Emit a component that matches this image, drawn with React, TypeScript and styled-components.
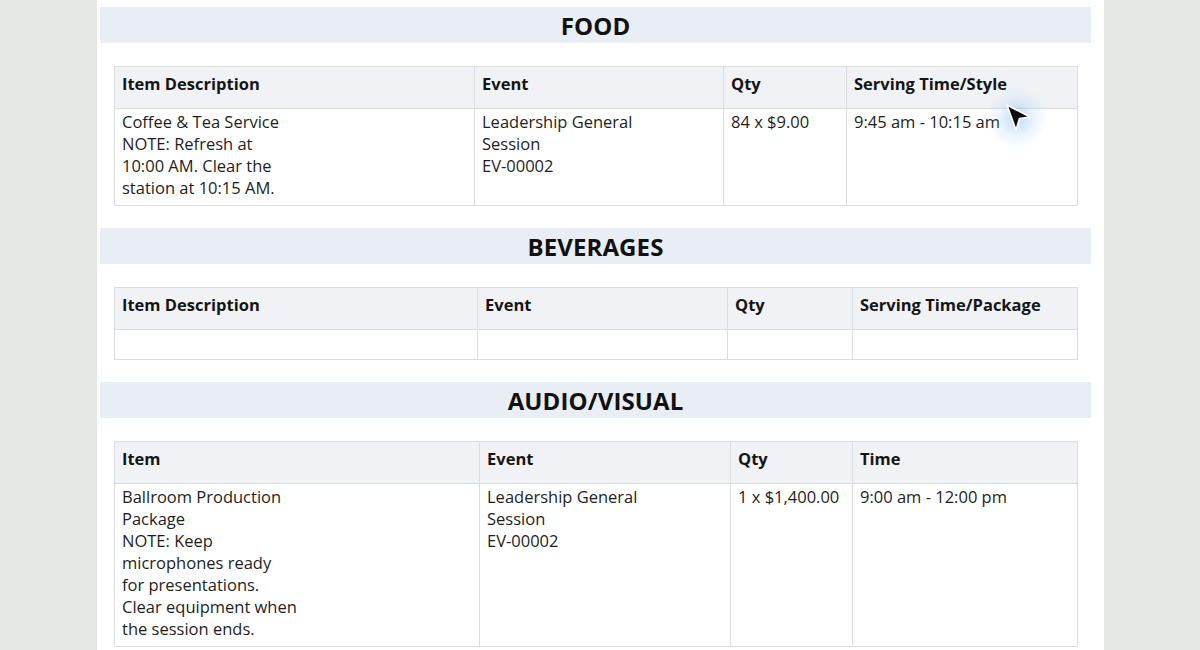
import React from "react";
import styled, { createGlobalStyle } from "styled-components";

const Global = createGlobalStyle`
  html, body { margin: 0; padding: 0; }
  body {
    background: #e3e9e2;
    font-family: "Open Sans", "Noto Sans", sans-serif;
    color: #1b1b1b;
    overflow: hidden;
  }
`;

const Page = styled.div`
  position: relative;
  width: 991px;
  margin-left: 97px;
  min-height: 650px;
  background: #ffffff;
  padding: 7px 13px 0 3px;
  box-sizing: content-box;
  display: flex;
  flex-direction: column;
  gap: 22px;
`;

const Section = styled.section`
  display: flex;
  flex-direction: column;
  gap: 23px;
`;

const Bar = styled.h2`
  margin: 0;
  height: 36px;
  background: #e9eef5;
  display: flex;
  align-items: center;
  justify-content: center;
  font-size: 24px;
  font-weight: 700;
  letter-spacing: 0.1px;
  color: #111;
`;

const Table = styled.table`
  margin: 0 14px;
  width: 963px;
  border-collapse: collapse;
  table-layout: fixed;
  font-size: 16.5px;
  line-height: 22px;
`;

const HeadCell = styled.th`
  height: 42px;
  box-sizing: border-box;
  padding: 0 7px 7px;
  background: #f0f2f5;
  border: 1px solid #d9dce0;
  text-align: left;
  font-weight: 700;
  font-size: 16.5px;
  color: #151515;
  vertical-align: middle;
`;

const Cell = styled.td<{ $h?: number }>`
  height: ${(p) => (p.$h ? `${p.$h}px` : "auto")};
  box-sizing: border-box;
  padding: 2px 7px 6px;
  border: 1px solid #d9dce0;
  vertical-align: top;
  color: #1e1e1e;
  white-space: pre-line;
`;

const CursorWrap = styled.div`
  position: absolute;
  left: 907px;
  top: 103px;
  width: 30px;
  height: 30px;
  pointer-events: none;
  &::before {
    content: "";
    position: absolute;
    left: -18px;
    top: -16px;
    width: 62px;
    height: 62px;
    border-radius: 50%;
    background: radial-gradient(circle, rgba(80, 150, 240, 0.35) 0%, rgba(120, 180, 250, 0.15) 40%, rgba(255, 255, 255, 0) 70%);
  }
  svg { position: relative; }
`;

type TableSpec = {
  title: string;
  cols: number[];
  heads: string[];
  rows: string[][];
  bodyH: number;
};

const specs: TableSpec[] = [
  {
    title: "FOOD",
    cols: [360, 249, 123, 231],
    heads: ["Item Description", "Event", "Qty", "Serving Time/Style"],
    rows: [
      [
        "Coffee & Tea Service\nNOTE: Refresh at\n10:00 AM. Clear the\nstation at 10:15 AM.",
        "Leadership General\nSession\nEV-00002",
        "84 x $9.00",
        "9:45 am - 10:15 am",
      ],
    ],
    bodyH: 97,
  },
  {
    title: "BEVERAGES",
    cols: [363, 250, 125, 225],
    heads: ["Item Description", "Event", "Qty", "Serving Time/Package"],
    rows: [["", "", "", ""]],
    bodyH: 30,
  },
  {
    title: "AUDIO/VISUAL",
    cols: [365, 251, 122, 225],
    heads: ["Item", "Event", "Qty", "Time"],
    rows: [
      [
        "Ballroom Production\nPackage\nNOTE: Keep\nmicrophones ready\nfor presentations.\nClear equipment when\nthe session ends.",
        "Leadership General\nSession\nEV-00002",
        "1 x $1,400.00",
        "9:00 am - 12:00 pm",
      ],
    ],
    bodyH: 163,
  },
];

const Cursor = () => (
  <CursorWrap>
    <svg width="30" height="30" viewBox="0 0 30 30">
      <path
        d="M3 2 L26 14 L15.5 15.5 L12 27 Z"
        fill="#0d0d0d"
        stroke="#ffffff"
        strokeWidth="1.6"
        strokeLinejoin="round"
      />
    </svg>
  </CursorWrap>
);

export default function App() {
  return (
    <>
      <Global />
      <Page>
        {specs.map((s) => (
          <Section key={s.title}>
            <Bar>{s.title}</Bar>
            <Table>
              <colgroup>
                {s.cols.map((w, i) => (
                  <col key={i} style={{ width: w }} />
                ))}
              </colgroup>
              <thead>
                <tr>
                  {s.heads.map((h) => (
                    <HeadCell key={h}>{h}</HeadCell>
                  ))}
                </tr>
              </thead>
              <tbody>
                {s.rows.map((r, ri) => (
                  <tr key={ri}>
                    {r.map((c, ci) => (
                      <Cell key={ci} $h={s.bodyH}>
                        {c}
                      </Cell>
                    ))}
                  </tr>
                ))}
              </tbody>
            </Table>
          </Section>
        ))}
        <Cursor />
      </Page>
    </>
  );
}
